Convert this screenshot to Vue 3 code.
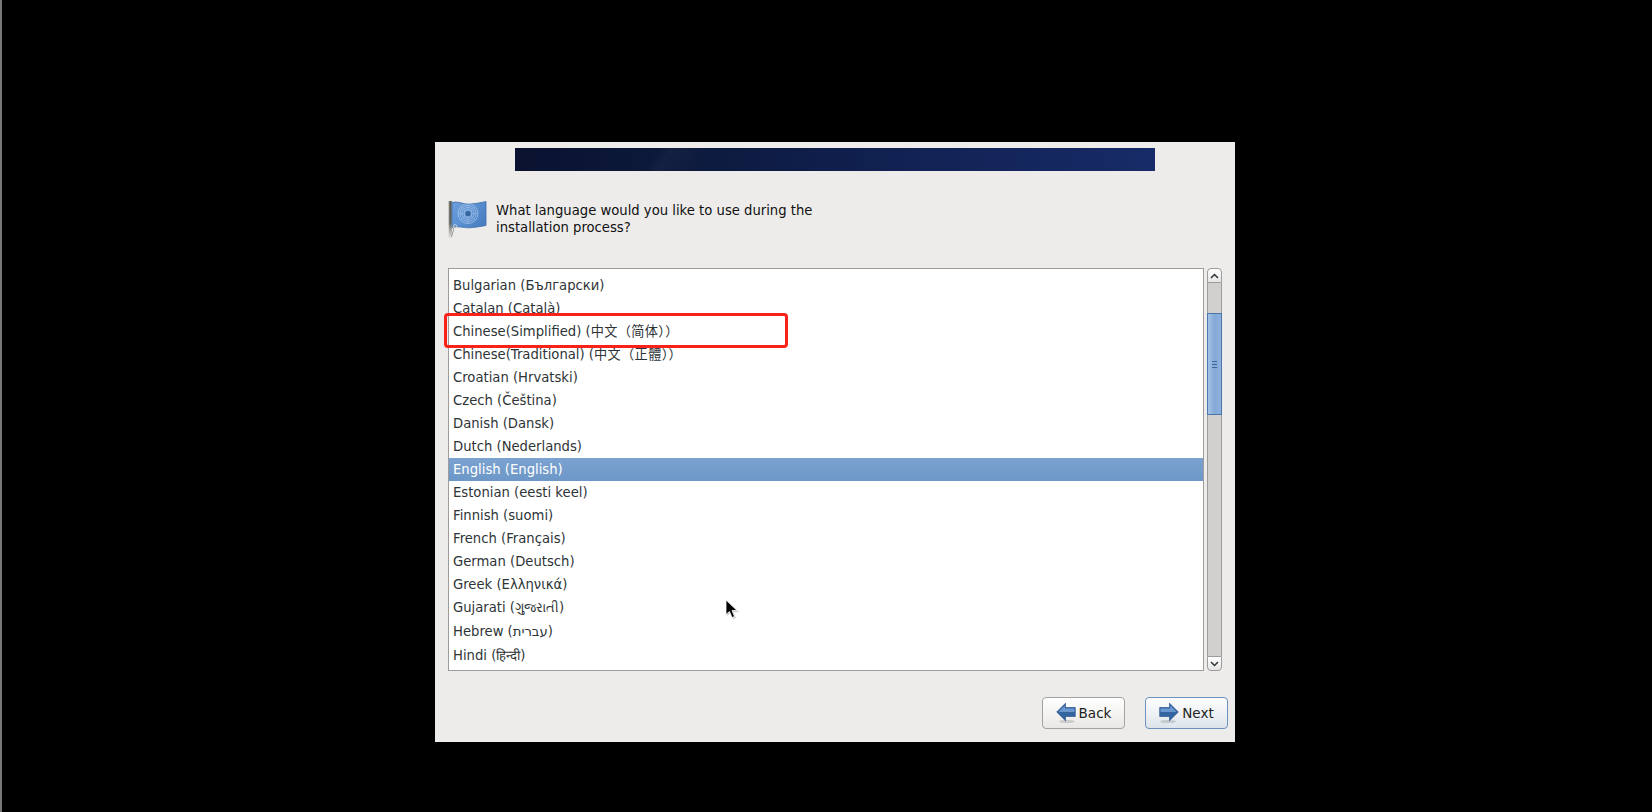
<script setup>
const rows = [
  { t: 'Bulgarian (Български)' },
  { t: 'Catalan (Català)' },
  { t: 'Chinese(Simplified) (', cjk: '中文（简体））' },
  { t: 'Chinese(Traditional) (', cjk: '中文（正體））' },
  { t: 'Croatian (Hrvatski)' },
  { t: 'Czech (Čeština)' },
  { t: 'Danish (Dansk)' },
  { t: 'Dutch (Nederlands)' },
  { t: 'English (English)', sel: true },
  { t: 'Estonian (eesti keel)' },
  { t: 'Finnish (suomi)' },
  { t: 'French (Français)' },
  { t: 'German (Deutsch)' },
  { t: 'Greek (Ελληνικά)' },
  { t: 'Gujarati (ગુજરાતી)', tall: true },
  { t: 'Hebrew (עברית)', tall: true },
  { t: 'Hindi (हिन्दी)', tall: true }
]
const rings = [4, 6, 8, 10]
</script>

<template>
  <div class="screen">
    <div class="stripe"></div>
    <div class="panel">
      <div class="banner"></div>
      <div class="question">
        <svg class="flag" width="40" height="40" viewBox="0 0 40 40">
          <defs>
            <linearGradient id="pole" x1="0" x2="1" y1="0" y2="0">
              <stop offset="0" stop-color="#a8a8a4" />
              <stop offset="0.5" stop-color="#55554f" />
              <stop offset="1" stop-color="#8a8a86" />
            </linearGradient>
            <linearGradient id="poleFade" x1="0" x2="0" y1="0" y2="1">
              <stop offset="0.6" stop-color="#fff" stop-opacity="1" />
              <stop offset="1" stop-color="#fff" stop-opacity="0" />
            </linearGradient>
            <mask id="fade"><rect width="40" height="40" fill="url(#poleFade)" /></mask>
            <linearGradient id="cloth" x1="0" x2="1" y1="0" y2="0.6">
              <stop offset="0" stop-color="#6d9fdc" />
              <stop offset="0.55" stop-color="#5a90d2" />
              <stop offset="1" stop-color="#4a7fc2" />
            </linearGradient>
          </defs>
          <rect x="0.5" y="2" width="3.5" height="37" fill="url(#pole)" mask="url(#fade)" />
          <path d="M4 3.5C11 2 15 5.5 22 5C29 4.6 33 3.5 38 2.5V26.5C33 27.5 29 28 24 28.6C16 29.6 12 26.5 4 28.5Z" fill="url(#cloth)" stroke="#3f6eab" stroke-width="0.8" />
          <g fill="none" stroke="#a9c6e9" stroke-width="0.9" opacity="0.85">
            <circle v-for="r in rings" :key="r" cx="20" cy="14.5" :r="r" />
            <path d="M10 14.5H30M20 4.5V24.5M13 7.5L27 21.5M27 7.5L13 21.5" stroke-width="0.5" />
          </g>
          <circle cx="20" cy="14.5" r="2.6" fill="#34659f" />
          <path d="M7 27C5.5 28 5 30 5.5 31L3.5 38" fill="none" stroke="#9a9a96" stroke-width="1" />
          <circle cx="7" cy="27.5" r="1.8" fill="none" stroke="#dcdcd8" stroke-width="0.8" />
        </svg>
        <p class="prompt">What language would you like to use during the<br />installation process?</p>
      </div>
      <div class="list-area">
        <div class="list">
          <div v-for="r in rows" :key="r.t" class="row" :class="{ sel: r.sel, tall: r.tall }">{{ r.t }}<span v-if="r.cjk" class="cjk">{{ r.cjk }}</span></div>
        </div>
        <div class="scrollbar">
          <div class="step up">
            <svg width="9" height="6" viewBox="0 0 9 6"><path d="M1 5L4.5 1.5L8 5" fill="none" stroke="#2e3436" stroke-width="1.5" /></svg>
          </div>
          <div class="trough">
            <div class="thumb">
              <i></i><i></i><i></i>
            </div>
          </div>
          <div class="step down">
            <svg width="9" height="6" viewBox="0 0 9 6"><path d="M1 1L4.5 4.5L8 1" fill="none" stroke="#2e3436" stroke-width="1.5" /></svg>
          </div>
        </div>
      </div>
      <div class="actions">
        <button class="btn">
          <svg width="20" height="22" viewBox="0 0 20 22">
            <ellipse cx="11" cy="19.5" rx="8" ry="1.6" fill="#000" opacity="0.14" />
            <path d="M0.7 10L9.5 1.2V5.5H19.3V14.5H9.5V18.8Z" fill="#35659f" stroke="#2b5490" stroke-width="0.7" />
            <path d="M2.5 10L8.8 3.5V6.5H18.5V10Z" fill="#6c98d0" />
          </svg>
          <span>Back</span>
        </button>
        <button class="btn focus">
          <svg width="20" height="22" viewBox="0 0 20 22">
            <ellipse cx="9" cy="19.5" rx="8" ry="1.6" fill="#000" opacity="0.14" />
            <path d="M19.3 10L10.5 1.2V5.5H0.7V14.5H10.5V18.8Z" fill="#35659f" stroke="#2b5490" stroke-width="0.7" />
            <path d="M1.5 6.5H11.2V3.5L17.5 10H1.5Z" fill="#6c98d0" />
          </svg>
          <span>Next</span>
        </button>
      </div>
      <div class="callout"></div>
    </div>
    <svg class="cursor" width="15" height="21" viewBox="0 0 15 21">
      <path d="M2 2V17L5.5 14L8 20L11 19L8.5 13H14Z" fill="#000" opacity="0.2" />
      <path d="M1 1V15.5L4.5 12.5L7 18.5L9.5 17.5L7 11.5H12Z" fill="#000" stroke="#fff" stroke-width="0.8" />
    </svg>
  </div>
</template>

<style scoped>
.screen {
  position: relative;
  width: 1652px;
  height: 812px;
  background: #000;
  overflow: hidden;
  padding: 142px 0 0 435px;
  box-sizing: border-box;
  font-family: "DejaVu Sans", "Noto Sans CJK SC", sans-serif;
  font-size: 13.2px;
  color: #2e3436;
}
.stripe {
  position: absolute;
  left: 0;
  top: 0;
  width: 2px;
  height: 812px;
  background: #777;
}
.panel {
  position: relative;
  width: 800px;
  height: 600px;
  background: #edeceb;
  box-sizing: border-box;
  padding: 6px 13px 0;
}
.banner {
  width: 640px;
  height: 23px;
  margin-left: 67px;
  background:
    linear-gradient(125deg, transparent 22%, rgba(255, 255, 255, 0.03) 24%, transparent 30%),
    linear-gradient(90deg, #0a1230 0%, #0b1735 14%, #10204f 55%, #172b68 100%);
}
.question {
  display: flex;
  margin-top: 28px;
  height: 40px;
  margin-bottom: 29px;
  align-items: center;
}
.flag {
  flex: none;
  margin-right: 8px;
}
.prompt {
  margin: 0;
  line-height: 17px;
  color: #111;
}
.list-area {
  display: flex;
  height: 403px;
}
.list {
  width: 756px;
  height: 403px;
  box-sizing: border-box;
  background: #fff;
  border: 1px solid #9d9c9b;
  padding-top: 5px;
  overflow: hidden;
}
.row {
  height: 23px;
  line-height: 23px;
  padding-left: 4px;
  white-space: nowrap;
}
.row.tall {
  height: 24px;
  line-height: 24px;
}
.row.sel {
  background: linear-gradient(#7ba2d0, #6d97c8);
  color: #fff;
}
.cjk {
  letter-spacing: 0.35px;
}
.scrollbar {
  width: 15px;
  margin-left: 3px;
  height: 403px;
  display: flex;
  flex-direction: column;
}
.step {
  height: 15px;
  box-sizing: border-box;
  border: 1px solid #9d9c9b;
  background: linear-gradient(#fff, #e6e5e4);
  display: flex;
  align-items: center;
  justify-content: center;
}
.step.up {
  border-radius: 4px 4px 0 0;
}
.step.down {
  border-radius: 0 0 4px 4px;
}
.trough {
  flex: 1;
  background: #d1d0cf;
  border-left: 1px solid #9d9c9b;
  border-right: 1px solid #9d9c9b;
  padding-top: 30px;
}
.thumb {
  margin: 0 -1px;
  height: 102px;
  box-sizing: border-box;
  border: 1px solid #4a78ad;
  background: linear-gradient(90deg, #a5c3e6, #84a9d8 50%, #8fb1dd);
  display: flex;
  flex-direction: column;
  align-items: center;
  justify-content: center;
  gap: 2px;
}
.thumb i {
  display: block;
  width: 5px;
  height: 1px;
  background: #3d6695;
}
.actions {
  display: flex;
  justify-content: flex-end;
  gap: 20px;
  margin-top: 26px;
  margin-right: -6px;
}
.btn {
  width: 83px;
  height: 32px;
  padding: 0;
  box-sizing: border-box;
  border: 1px solid #a3a2a0;
  border-radius: 4px;
  background: linear-gradient(#fff, #f4f3f2 55%, #e8e7e6);
  display: flex;
  align-items: center;
  justify-content: center;
  gap: 3px;
  font: inherit;
  font-size: 13.5px;
  color: #222;
}
.btn.focus {
  border-color: #6c92bf;
  background: linear-gradient(#fbfcfd, #eef1f4 55%, #dde4ec);
}
.callout {
  position: absolute;
  left: 9px;
  top: 171px;
  width: 344px;
  height: 35px;
  box-sizing: border-box;
  border: 3px solid #f9221a;
  border-radius: 4px;
}
.cursor {
  position: absolute;
  left: 725px;
  top: 599px;
}
</style>
